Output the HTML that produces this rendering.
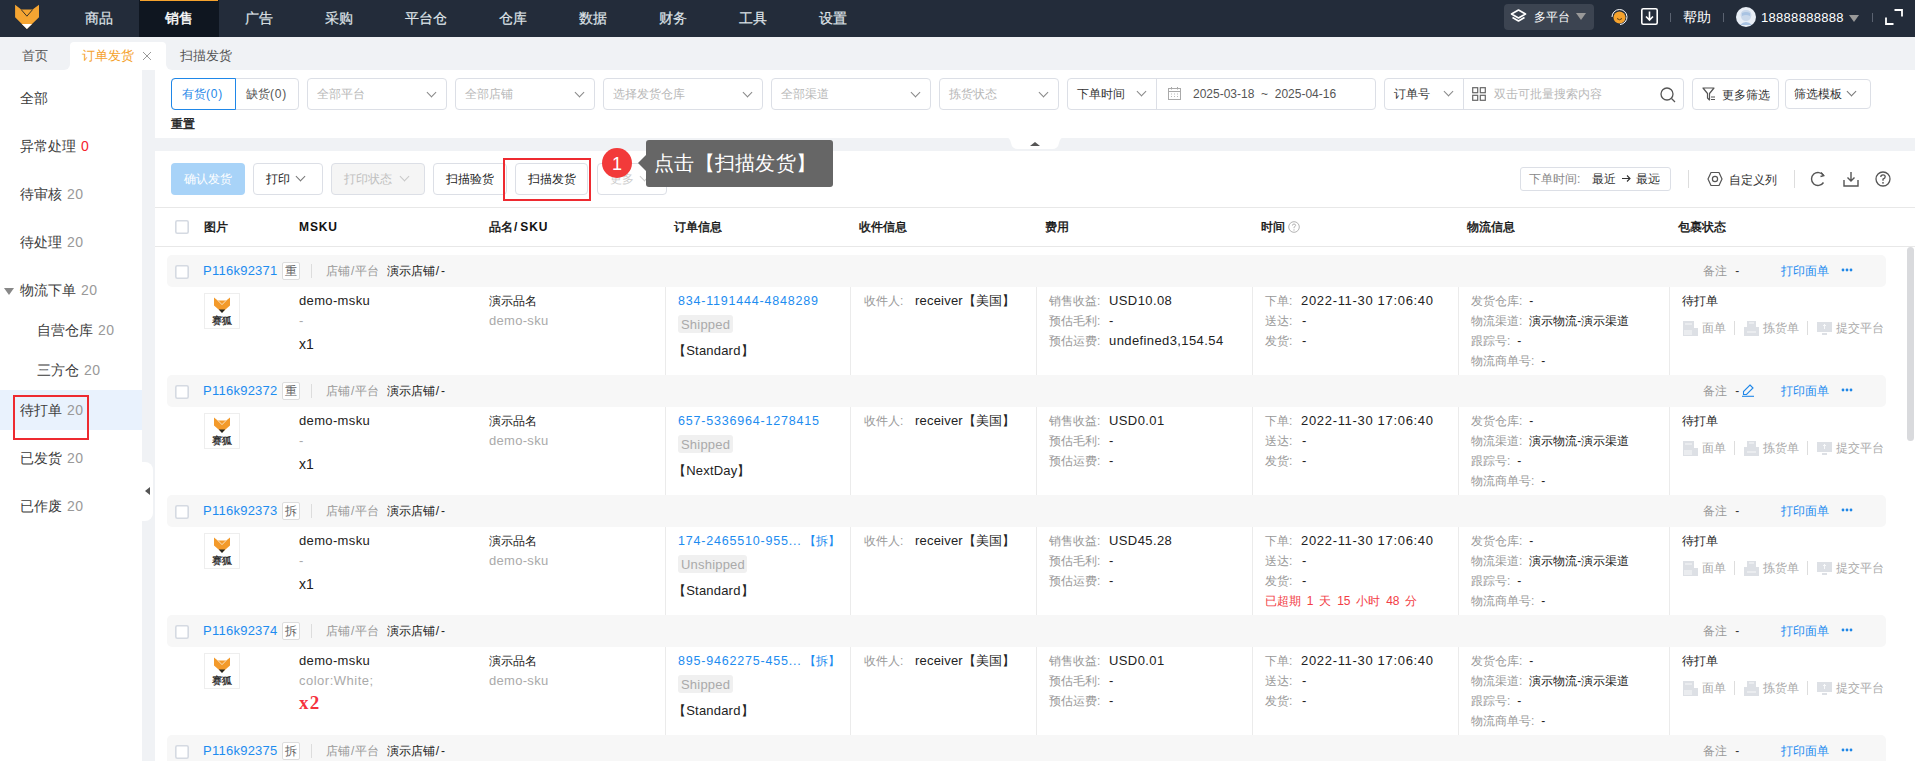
<!DOCTYPE html><html><head><meta charset="utf-8"><style>
*{box-sizing:border-box;margin:0;padding:0}
html,body{width:1915px;height:761px;overflow:hidden;background:#f0f2f5;font-family:"Liberation Sans",sans-serif;color:#333}
.ab{position:absolute}
.t{position:absolute;white-space:nowrap;line-height:1}
.nav{position:absolute;left:0;top:0;width:1915px;height:37px;background:#232c3a}
.ni{position:absolute;top:0;height:36px;line-height:36px;color:#dfe3e8;font-size:14px;text-align:center;-webkit-text-stroke:0.2px #dfe3e8}
.box{position:absolute;border:1px solid #dcdfe6;border-radius:4px;background:#fff}
.ph{color:#b8b8b8}
.chev{position:absolute;width:7px;height:7px;border-right:1.2px solid #777;border-bottom:1.2px solid #777;transform:rotate(45deg)}
.vl{position:absolute;width:1px;background:#ebebeb}
.g{color:#999}
.blue{color:#1d8cf0}
.lat{letter-spacing:0.6px}
</style></head><body>
<div class="nav"></div>
<div class="ab" style="left:139px;top:0;width:80px;height:37px;background:#0f1620"></div>
<div class="ab" style="left:140px;top:0;width:78px;height:1px;background:#f5a22d"></div>
<svg class="ab" style="left:0;top:0" width="56" height="36" viewBox="0 0 56 36"><path d="M15.1 4.7 L21.2 9.4 H32.6 L39 4.7 V17.3 L26.9 29.1 L15.1 17.3 Z" fill="#f5a532"/><path d="M21.2 9.6 L26.9 16.2 L32.6 9.6" stroke="#3b3326" stroke-width="1" fill="none"/><path d="M21.8 23.9 H32 L26.9 29.1 Z" fill="#fff"/></svg>
<div class="ni" style="left:59px;width:80px;color:#dfe3e8;font-weight:normal">商品</div>
<div class="ni" style="left:139px;width:80px;color:#ffffff;font-weight:normal;-webkit-text-stroke:0.4px #fff">销售</div>
<div class="ni" style="left:219px;width:80px;color:#dfe3e8;font-weight:normal">广告</div>
<div class="ni" style="left:299px;width:80px;color:#dfe3e8;font-weight:normal">采购</div>
<div class="ni" style="left:379px;width:94px;color:#dfe3e8;font-weight:normal">平台仓</div>
<div class="ni" style="left:473px;width:80px;color:#dfe3e8;font-weight:normal">仓库</div>
<div class="ni" style="left:553px;width:80px;color:#dfe3e8;font-weight:normal">数据</div>
<div class="ni" style="left:633px;width:80px;color:#dfe3e8;font-weight:normal">财务</div>
<div class="ni" style="left:713px;width:80px;color:#dfe3e8;font-weight:normal">工具</div>
<div class="ni" style="left:793px;width:80px;color:#dfe3e8;font-weight:normal">设置</div>
<div class="ab" style="left:1504px;top:4px;width:90px;height:26px;background:#3c4451;border-radius:4px"></div>
<svg class="ab" style="left:1510px;top:9px" width="17" height="16" viewBox="0 0 17 16"><path d="M8.5 1 L15.5 5 L8.5 9 L1.5 5 Z" fill="none" stroke="#fff" stroke-width="1.6" stroke-linejoin="round"/><path d="M2.5 8.5 L8.5 12 L14.5 8.5" fill="none" stroke="#fff" stroke-width="1.6" stroke-linejoin="round"/></svg>
<div class="t" style="left:1534px;top:11px;font-size:12px;color:#fff">多平台</div>
<div class="ab" style="left:1576px;top:13px;width:0;height:0;border-left:5px solid transparent;border-right:5px solid transparent;border-top:7px solid #999"></div>
<svg class="ab" style="left:1610px;top:8px" width="18" height="18" viewBox="0 0 18 18"><circle cx="9.5" cy="9.5" r="6" fill="#f5a22d"/><path d="M7 10.5 Q9.5 13 12 10.5" stroke="#5a3b10" stroke-width="1" fill="none"/><path d="M2 9 A7.5 7.5 0 1 1 10 16.5" stroke="#fff" stroke-width="1" fill="none"/></svg>
<svg class="ab" style="left:1641px;top:8px" width="17" height="17" viewBox="0 0 17 17"><rect x="0.8" y="0.8" width="15.4" height="15.4" rx="1.5" fill="none" stroke="#fff" stroke-width="1.6"/><path d="M8.5 3.5 V11.5 M5 8.5 L8.5 12 L12 8.5" stroke="#fff" stroke-width="1.6" fill="none"/></svg>
<div class="ab" style="left:1670px;top:13px;width:1px;height:9px;background:#5a6270"></div>
<div class="t" style="left:1683px;top:10px;font-size:14px;color:#fff">帮助</div>
<div class="ab" style="left:1723px;top:13px;width:1px;height:9px;background:#5a6270"></div>
<svg class="ab" style="left:1736px;top:7px" width="20" height="20" viewBox="0 0 20 20"><circle cx="10" cy="10" r="10" fill="#e8eef6"/><path d="M4.5 8 Q5 3 10 3 Q15 3 15.5 8 L15 10 Q14 14 10 14 Q6 14 5 10 Z" fill="#c9d8ea"/><path d="M6 6 Q10 4 14 6 L14 9 Q10 7 6 9 Z" fill="#a9c3e2"/><path d="M4 18 Q10 12 16 18 Z" fill="#a9c3e2"/></svg>
<div class="t lat" style="left:1761px;top:11px;font-size:13px;color:#fff;letter-spacing:0.3px">18888888888</div>
<div class="ab" style="left:1849px;top:15px;width:0;height:0;border-left:5px solid transparent;border-right:5px solid transparent;border-top:7px solid #999"></div>
<div class="ab" style="left:1872px;top:13px;width:1px;height:9px;background:#5a6270"></div>
<svg class="ab" style="left:1885px;top:9px" width="18" height="16" viewBox="0 0 18 16"><path d="M9.5 1 H17 V7.5 M1 8.5 V15 H8.5" stroke="#fff" stroke-width="1.8" fill="none"/></svg>
<div class="ab" style="left:0;top:37px;width:1915px;height:33px;background:#f0f2f5"></div>
<div class="t" style="left:22px;top:49px;font-size:13px;color:#555">首页</div>
<div class="ab" style="left:70px;top:42px;width:96px;height:28px;background:#fff;border-radius:4px 4px 0 0"></div>
<div class="ab" style="left:64px;top:64px;width:6px;height:6px;background:#fff"></div><div class="ab" style="left:64px;top:64px;width:6px;height:6px;background:#f0f2f5;border-radius:0 0 6px 0"></div>
<div class="ab" style="left:166px;top:64px;width:6px;height:6px;background:#fff"></div><div class="ab" style="left:166px;top:64px;width:6px;height:6px;background:#f0f2f5;border-radius:0 0 0 6px"></div>
<div class="t" style="left:82px;top:49px;font-size:13px;color:#f5a22d">订单发货</div>
<svg class="ab" style="left:142px;top:51px" width="10" height="10" viewBox="0 0 10 10"><path d="M1 1 L9 9 M9 1 L1 9" stroke="#999" stroke-width="1"/></svg>
<div class="t" style="left:180px;top:49px;font-size:13px;color:#555">扫描发货</div>
<div class="ab" style="left:0;top:70px;width:142px;height:691px;background:#fff"></div>
<div class="ab" style="left:0;top:390px;width:142px;height:40px;background:#e9f2fd"></div>
<div class="t" style="left:20px;top:91px;font-size:14px;color:#3c3c3c">全部<span style="color:#999;margin-left:5px;letter-spacing:0.5px"></span></div>
<div class="t" style="left:20px;top:139px;font-size:14px;color:#3c3c3c">异常处理<span style="color:#f5222d;margin-left:5px;letter-spacing:0.5px">0</span></div>
<div class="t" style="left:20px;top:187px;font-size:14px;color:#3c3c3c">待审核<span style="color:#999;margin-left:5px;letter-spacing:0.5px">20</span></div>
<div class="t" style="left:20px;top:235px;font-size:14px;color:#3c3c3c">待处理<span style="color:#999;margin-left:5px;letter-spacing:0.5px">20</span></div>
<div class="t" style="left:20px;top:283px;font-size:14px;color:#3c3c3c">物流下单<span style="color:#999;margin-left:5px;letter-spacing:0.5px">20</span></div>
<div class="t" style="left:37px;top:323px;font-size:14px;color:#3c3c3c">自营仓库<span style="color:#999;margin-left:5px;letter-spacing:0.5px">20</span></div>
<div class="t" style="left:37px;top:363px;font-size:14px;color:#3c3c3c">三方仓<span style="color:#999;margin-left:5px;letter-spacing:0.5px">20</span></div>
<div class="t" style="left:20px;top:403px;font-size:14px;color:#3c3c3c">待打单<span style="color:#999;margin-left:5px;letter-spacing:0.5px">20</span></div>
<div class="t" style="left:20px;top:451px;font-size:14px;color:#3c3c3c">已发货<span style="color:#999;margin-left:5px;letter-spacing:0.5px">20</span></div>
<div class="t" style="left:20px;top:499px;font-size:14px;color:#3c3c3c">已作废<span style="color:#999;margin-left:5px;letter-spacing:0.5px">20</span></div>
<div class="ab" style="left:4px;top:288px;width:0;height:0;border-left:5px solid transparent;border-right:5px solid transparent;border-top:7px solid #888"></div>
<div class="ab" style="left:13px;top:395px;width:76px;height:45px;border:2px solid #ee2a30"></div>
<div class="ab" style="left:142px;top:462px;width:11px;height:59px;background:#fff;border-radius:0 8px 8px 0"></div>
<div class="ab" style="left:145px;top:487px;width:0;height:0;border-top:4px solid transparent;border-bottom:4px solid transparent;border-right:5px solid #555"></div>
<div class="ab" style="left:155px;top:70px;width:1760px;height:68px;background:#fff"></div>
<div class="ab" style="left:171px;top:78px;width:128px;height:32px;border:1px solid #dcdfe6;border-radius:4px;background:#fff"></div>
<div class="ab" style="left:171px;top:78px;width:65px;height:32px;border:1px solid #1f87e8;border-radius:4px 0 0 4px"></div>
<div class="t" style="left:182px;top:88px;font-size:12px;color:#1f87e8">有货<span style="letter-spacing:0.8px">(0)</span></div>
<div class="t" style="left:246px;top:88px;font-size:12px;color:#555">缺货<span style="letter-spacing:0.8px">(0)</span></div>
<div class="box" style="left:307px;top:78px;width:140px;height:32px"></div>
<div class="t ph" style="left:317px;top:88px;font-size:12px">全部平台</div>
<div class="chev" style="left:428px;top:89px;border-color:#888"></div>
<div class="box" style="left:455px;top:78px;width:140px;height:32px"></div>
<div class="t ph" style="left:465px;top:88px;font-size:12px">全部店铺</div>
<div class="chev" style="left:576px;top:89px;border-color:#888"></div>
<div class="box" style="left:603px;top:78px;width:160px;height:32px"></div>
<div class="t ph" style="left:613px;top:88px;font-size:12px">选择发货仓库</div>
<div class="chev" style="left:744px;top:89px;border-color:#888"></div>
<div class="box" style="left:771px;top:78px;width:160px;height:32px"></div>
<div class="t ph" style="left:781px;top:88px;font-size:12px">全部渠道</div>
<div class="chev" style="left:912px;top:89px;border-color:#888"></div>
<div class="box" style="left:939px;top:78px;width:120px;height:32px"></div>
<div class="t ph" style="left:949px;top:88px;font-size:12px">拣货状态</div>
<div class="chev" style="left:1040px;top:89px;border-color:#888"></div>
<div class="box" style="left:1067px;top:78px;width:309px;height:32px"></div>
<div class="ab" style="left:1156px;top:79px;width:1px;height:30px;background:#dcdfe6"></div>
<div class="t" style="left:1077px;top:88px;font-size:12px;color:#333">下单时间</div>
<div class="chev" style="left:1138px;top:88px;border-color:#888"></div>
<svg class="ab" style="left:1168px;top:87px" width="13" height="13" viewBox="0 0 13 13"><rect x="0.5" y="1.5" width="12" height="11" fill="none" stroke="#aaa"/><path d="M0.5 4.5 H12.5 M3.5 0 V2.5 M9.5 0 V2.5" stroke="#aaa"/><path d="M3 7 H4 M6 7 H7 M9 7 H10 M3 9.5 H4 M6 9.5 H7 M9 9.5 H10" stroke="#bbb"/></svg>
<div class="t" style="left:1193px;top:88px;font-size:12px;color:#555">2025-03-18 &nbsp;~&nbsp; 2025-04-16</div>
<div class="box" style="left:1384px;top:78px;width:300px;height:32px"></div>
<div class="ab" style="left:1463px;top:79px;width:1px;height:30px;background:#dcdfe6"></div>
<div class="t" style="left:1394px;top:88px;font-size:12px;color:#333">订单号</div>
<div class="chev" style="left:1445px;top:88px;border-color:#888"></div>
<svg class="ab" style="left:1472px;top:87px" width="14" height="14" viewBox="0 0 14 14"><rect x="0.7" y="0.7" width="5" height="5" fill="none" stroke="#666" stroke-width="1.2"/><rect x="8.3" y="0.7" width="5" height="5" fill="none" stroke="#666" stroke-width="1.2"/><rect x="0.7" y="8.3" width="5" height="5" fill="none" stroke="#666" stroke-width="1.2"/><rect x="8.3" y="8.3" width="5" height="5" fill="none" stroke="#666" stroke-width="1.2"/></svg>
<div class="t ph" style="left:1494px;top:88px;font-size:12px">双击可批量搜索内容</div>
<svg class="ab" style="left:1660px;top:87px" width="16" height="16" viewBox="0 0 16 16"><circle cx="7" cy="7" r="6" fill="none" stroke="#555" stroke-width="1.3"/><path d="M11.5 11.5 L15 15" stroke="#555" stroke-width="1.3"/></svg>
<div class="box" style="left:1692px;top:78px;width:87px;height:32px"></div>
<svg class="ab" style="left:1702px;top:87px" width="14" height="14" viewBox="0 0 14 14"><path d="M1 1 H12 L7.5 6.5 V13 L5.5 11 V6.5 Z" fill="none" stroke="#555" stroke-width="1.2" stroke-linejoin="round"/><path d="M9 10 H13 M9 12.5 H13" stroke="#555" stroke-width="1"/></svg>
<div class="t" style="left:1722px;top:89px;font-size:12px;color:#333">更多筛选</div>
<div class="box" style="left:1785px;top:79px;width:86px;height:30px"></div>
<div class="t" style="left:1794px;top:88px;font-size:12px;color:#333">筛选模板</div>
<div class="chev" style="left:1848px;top:88px;border-color:#777"></div>
<div class="t" style="left:171px;top:118px;font-size:12px;color:#222;-webkit-text-stroke:0.4px #222">重置</div>
<svg class="ab" style="left:1005px;top:137px" width="60" height="14" viewBox="0 0 60 14"><path d="M0 0 H60 Q55 0 54 6 Q53 12 47 12 H13 Q7 12 6 6 Q5 0 0 0 Z" fill="#fff"/><path d="M25 9 L30 5 L35 9 Z" fill="#555"/></svg>
<div class="ab" style="left:155px;top:151px;width:1760px;height:610px;background:#fff"></div>
<div class="ab" style="left:171px;top:163px;width:74px;height:32px;background:#a8d3f8;border-radius:4px"></div>
<div class="t" style="left:184px;top:173px;font-size:12px;color:#fff">确认发货</div>
<div class="box" style="left:253px;top:163px;width:70px;height:32px"></div>
<div class="t" style="left:266px;top:173px;font-size:12px;color:#222">打印</div>
<div class="chev" style="left:297px;top:173px;border-color:#777"></div>
<div class="box" style="left:331px;top:163px;width:94px;height:32px;background:#f5f5f5"></div>
<div class="t" style="left:344px;top:173px;font-size:12px;color:#c0c0c0">打印状态</div>
<div class="chev" style="left:401px;top:173px;border-color:#c8c8c8"></div>
<div class="box" style="left:433px;top:163px;width:74px;height:32px"></div>
<div class="t" style="left:446px;top:173px;font-size:12px;color:#222">扫描验货</div>
<div class="box" style="left:515px;top:163px;width:73px;height:32px"></div>
<div class="t" style="left:528px;top:173px;font-size:12px;color:#222">扫描发货</div>
<div class="box" style="left:597px;top:163px;width:70px;height:32px"></div>
<div class="t" style="left:610px;top:173px;font-size:12px;color:#ccc">更多</div>
<div class="chev" style="left:641px;top:173px;border-color:#ccc"></div>
<div class="ab" style="left:503px;top:158px;width:88px;height:43px;border:2px solid #ee2a30"></div>
<div class="ab" style="left:646px;top:140px;width:187px;height:47px;background:#666;border-radius:3px"></div>
<div class="ab" style="left:638px;top:155px;width:0;height:0;border-top:8px solid transparent;border-bottom:8px solid transparent;border-right:8px solid #666"></div>
<div class="t" style="left:654px;top:153px;font-size:20px;color:#fff;letter-spacing:0.3px">点击【扫描发货】</div>
<div class="ab" style="left:602px;top:148px;width:30px;height:30px;border-radius:50%;background:#f23a3a"></div>
<div class="t" style="left:602px;top:155px;width:30px;text-align:center;font-size:18px;color:#fff">1</div>
<div class="box" style="left:1520px;top:167px;width:151px;height:24px;border-radius:3px"></div>
<div class="t" style="left:1529px;top:173px;font-size:12px;color:#888">下单时间:<span style="color:#333;margin-left:12px">最近<svg style="margin:0 5px 0 6px;vertical-align:0px" width="9" height="9" viewBox="0 0 9 9"><path d="M0 4.5 H8 M5 1.5 L8 4.5 L5 7.5" stroke="#333" stroke-width="1.1" fill="none"/></svg>最远</span></div>
<div class="ab" style="left:1688px;top:170px;width:1px;height:18px;background:#ddd"></div>
<svg class="ab" style="left:1707px;top:171px" width="16" height="16" viewBox="0 0 16 16"><path d="M4 1.5 H12 L15 8 L12 14.5 H4 L1 8 Z" fill="none" stroke="#555" stroke-width="1.2" stroke-linejoin="round"/><circle cx="8" cy="8" r="2.6" fill="none" stroke="#555" stroke-width="1.2"/></svg>
<div class="t" style="left:1729px;top:174px;font-size:12px;color:#333">自定义列</div>
<div class="ab" style="left:1794px;top:170px;width:1px;height:18px;background:#ddd"></div>
<svg class="ab" style="left:1810px;top:171px" width="16" height="16" viewBox="0 0 16 16"><path d="M13.5 4.5 A6.5 6.5 0 1 0 13.5 11.5" fill="none" stroke="#555" stroke-width="1.4"/><path d="M11 1.5 L13.8 4.6 L10.5 5.5" fill="none" stroke="#555" stroke-width="1.3"/></svg>
<svg class="ab" style="left:1843px;top:171px" width="16" height="16" viewBox="0 0 16 16"><path d="M8 1 V10 M4.5 6.5 L8 10 L11.5 6.5 M1 9 V15 H15 V9" fill="none" stroke="#555" stroke-width="1.4"/></svg>
<svg class="ab" style="left:1875px;top:171px" width="16" height="16" viewBox="0 0 16 16"><circle cx="8" cy="8" r="7" fill="none" stroke="#555" stroke-width="1.3"/><path d="M5.8 6 Q5.8 3.8 8 3.8 Q10.2 3.8 10.2 5.8 Q10.2 7.2 8 8.2 V9.8" fill="none" stroke="#555" stroke-width="1.3"/><circle cx="8" cy="11.8" r="0.9" fill="#555"/></svg>
<div class="ab" style="left:155px;top:207px;width:1760px;height:1px;background:#e8e8e8"></div>
<div class="ab" style="left:155px;top:246px;width:1760px;height:1px;background:#e8e8e8"></div>
<svg class="ab" style="left:175px;top:220px" width="14" height="14" viewBox="0 0 14 14"><rect x="0.8" y="0.8" width="12.4" height="12.4" rx="1.5" fill="#fff" stroke="#d5dae2" stroke-width="1.6"/></svg>
<div class="t" style="left:204px;top:221px;font-size:12px;color:#111;-webkit-text-stroke:0.4px #111">图片</div>
<div class="t" style="left:299px;top:221px;font-size:12px;color:#111;-webkit-text-stroke:0.4px #111"><b style="-webkit-text-stroke:0;letter-spacing:0.9px">MSKU</b></div>
<div class="t" style="left:489px;top:221px;font-size:12px;color:#111;-webkit-text-stroke:0.4px #111">品名<b style="-webkit-text-stroke:0;letter-spacing:0.9px"><span style="margin:0 2px 0 1px">/</span>SKU</b></div>
<div class="t" style="left:674px;top:221px;font-size:12px;color:#111;-webkit-text-stroke:0.4px #111">订单信息</div>
<div class="t" style="left:859px;top:221px;font-size:12px;color:#111;-webkit-text-stroke:0.4px #111">收件信息</div>
<div class="t" style="left:1045px;top:221px;font-size:12px;color:#111;-webkit-text-stroke:0.4px #111">费用</div>
<div class="t" style="left:1261px;top:221px;font-size:12px;color:#111;-webkit-text-stroke:0.4px #111">时间</div>
<div class="t" style="left:1467px;top:221px;font-size:12px;color:#111;-webkit-text-stroke:0.4px #111">物流信息</div>
<div class="t" style="left:1678px;top:221px;font-size:12px;color:#111;-webkit-text-stroke:0.4px #111">包裹状态</div>
<svg class="ab" style="left:1288px;top:221px" width="12" height="12" viewBox="0 0 12 12"><circle cx="6" cy="6" r="5.3" fill="none" stroke="#aaa" stroke-width="0.9"/><path d="M4.4 4.6 Q4.4 3 6 3 Q7.6 3 7.6 4.4 Q7.6 5.4 6 6.2 V7.2" fill="none" stroke="#aaa" stroke-width="0.9"/><circle cx="6" cy="8.9" r="0.6" fill="#aaa"/></svg>
<div class="ab" style="left:1907px;top:247px;width:7px;height:194px;background:#d9dadd;border-radius:4px"></div>
<div class="ab" style="left:167px;top:255px;width:1719px;height:32px;background:#f7f7f7;border-radius:5px"></div>
<svg class="ab" style="left:175px;top:265px" width="14" height="14" viewBox="0 0 14 14"><rect x="0.8" y="0.8" width="12.4" height="12.4" rx="1.5" fill="#fff" stroke="#d5dae2" stroke-width="1.6"/></svg>
<div class="t blue lat" style="left:203px;top:264px;font-size:13px;letter-spacing:0.25px">P116k92371</div>
<div class="ab" style="left:282px;top:262px;width:18px;height:18px;border:1px solid #ddd;border-radius:2px;background:#fff"></div>
<div class="t" style="left:285px;top:265px;font-size:12px;color:#666">重</div>
<div class="ab" style="left:311px;top:264px;width:1px;height:14px;background:#ddd"></div>
<div class="t" style="left:326px;top:265px;font-size:12px;color:#999">店铺<span style="margin:0 1px">/</span>平台 <span style="color:#222;margin-left:4px">演示店铺<span style="margin-left:1px;letter-spacing:2px">/-</span></span></div>
<div class="t" style="left:1703px;top:265px;font-size:12px;color:#999">备注 <span style="color:#333;margin-left:5px">-</span></div>
<div class="t blue" style="left:1781px;top:265px;font-size:12px">打印面单</div>
<svg class="ab" style="left:1841px;top:268px" width="12" height="4" viewBox="0 0 12 4"><circle cx="2" cy="2" r="1.4" fill="#1f87e8"/><circle cx="6" cy="2" r="1.4" fill="#1f87e8"/><circle cx="10" cy="2" r="1.4" fill="#1f87e8"/></svg>
<div class="vl" style="left:665px;top:287px;height:88px"></div>
<div class="vl" style="left:850px;top:287px;height:88px"></div>
<div class="vl" style="left:1036px;top:287px;height:88px"></div>
<div class="vl" style="left:1252px;top:287px;height:88px"></div>
<div class="vl" style="left:1458px;top:287px;height:88px"></div>
<div class="vl" style="left:1669px;top:287px;height:88px"></div>
<div class="ab" style="left:204px;top:293px;width:36px;height:36px;border:1px solid #eee;background:#fff"></div>
<svg class="ab" style="left:214px;top:294px" width="16" height="20" viewBox="0 0 16 20"><path d="M0 3.4 L3.7 6.4 H12.3 L16 3.4 V11.4 L8 18.5 L0 11.4 Z" fill="#f39a2b"/><path d="M4 6.6 L8 10.6 L12 6.6" stroke="#fff" stroke-width="0.7" fill="none"/><path d="M4.8 15.6 L8 19 L11.2 15.6 Z" fill="#222"/></svg>
<div class="t" style="left:212px;top:315px;font-size:10px;color:#222;-webkit-text-stroke:0.3px #222;margin-top:1px">赛狐</div>
<div class="t lat" style="left:299px;top:294px;font-size:13px;color:#222;letter-spacing:0.35px">demo-msku</div>
<div class="t lat" style="left:299px;top:314px;font-size:13px;color:#aaa;letter-spacing:0.5px">-</div>
<div class="t" style="left:299px;top:337px;font-size:14px;color:#222">x1</div>
<div class="t" style="left:489px;top:295px;font-size:12px;color:#222">演示品名</div>
<div class="t lat" style="left:489px;top:314px;font-size:13px;color:#aaa;letter-spacing:0.3px">demo-sku</div>
<div class="t blue" style="left:678px;top:295px;font-size:12.5px;letter-spacing:0.8px">834-1191444-4848289</div>
<div class="ab" style="left:678px;top:315px;width:55px;height:18px;background:#f0f0f0;border-radius:3px"></div>
<div class="t" style="left:681px;top:318px;font-size:13px;color:#aaa;letter-spacing:0.2px">Shipped</div>
<div class="t" style="left:673px;top:344px;font-size:13px;color:#222;letter-spacing:0.2px">【Standard】</div>
<div class="t" style="left:864px;top:295px;font-size:12px;color:#999">收件人:</div>
<div class="t" style="left:915px;top:294px;font-size:13px;color:#222;letter-spacing:0.2px">receiver【美国】</div>
<div class="t" style="left:1049px;top:295px;font-size:12px;color:#999">销售收益:</div>
<div class="t" style="left:1109px;top:294px;font-size:13px;color:#222;letter-spacing:0.4px">USD10.08</div>
<div class="t" style="left:1049px;top:315px;font-size:12px;color:#999">预估毛利:</div>
<div class="t" style="left:1109px;top:314px;font-size:13px;color:#222">-</div>
<div class="t" style="left:1049px;top:335px;font-size:12px;color:#999">预估运费:</div>
<div class="t" style="left:1109px;top:334px;font-size:13px;color:#222;letter-spacing:0.4px">undefined3,154.54</div>
<div class="t" style="left:1265px;top:295px;font-size:12px;color:#999">下单:</div>
<div class="t" style="left:1301px;top:294px;font-size:13px;color:#222;letter-spacing:0.68px">2022-11-30 17:06:40</div>
<div class="t" style="left:1265px;top:315px;font-size:12px;color:#999">送达:</div>
<div class="t" style="left:1302px;top:314px;font-size:13px;color:#222">-</div>
<div class="t" style="left:1265px;top:335px;font-size:12px;color:#999">发货:</div>
<div class="t" style="left:1302px;top:334px;font-size:13px;color:#222">-</div>
<div class="t" style="left:1471px;top:295px;font-size:12px;color:#999">发货仓库:<span style="color:#222;margin-left:7px">-</span></div>
<div class="t" style="left:1471px;top:315px;font-size:12px;color:#999">物流渠道:<span style="color:#222;margin-left:7px">演示物流-演示渠道</span></div>
<div class="t" style="left:1471px;top:335px;font-size:12px;color:#999">跟踪号:<span style="color:#222;margin-left:7px">-</span></div>
<div class="t" style="left:1471px;top:355px;font-size:12px;color:#999">物流商单号:<span style="color:#222;margin-left:7px">-</span></div>
<div class="t" style="left:1682px;top:295px;font-size:12px;color:#222">待打单</div>
<svg class="ab" style="left:1683px;top:321px" width="15" height="15" viewBox="0 0 15 15"><rect x="0" y="0" width="11" height="15" fill="#dde0e5"/><rect x="9" y="7" width="6" height="8" fill="#dde0e5"/><path d="M2 3 H9 M2 9 V14 M4 9 V14 M6 9 V14 M8 9 V14" stroke="#fff" stroke-width="0.8"/></svg>
<div class="t" style="left:1702px;top:322px;font-size:12px;color:#aaa">面单</div>
<div class="ab" style="left:1734px;top:321px;width:1px;height:14px;background:#ddd"></div>
<svg class="ab" style="left:1744px;top:321px" width="15" height="15" viewBox="0 0 15 15"><rect x="3" y="0" width="9" height="6" fill="#dde0e5"/><rect x="0" y="6" width="15" height="9" fill="#dde0e5"/><path d="M5 2 H10 M3 11 H12" stroke="#fff" stroke-width="0.8"/></svg>
<div class="t" style="left:1763px;top:322px;font-size:12px;color:#aaa">拣货单</div>
<div class="ab" style="left:1807px;top:321px;width:1px;height:14px;background:#ddd"></div>
<svg class="ab" style="left:1817px;top:322px" width="15" height="14" viewBox="0 0 15 14"><rect x="0" y="0" width="15" height="10" fill="#dde0e5"/><rect x="5" y="11" width="5" height="2" fill="#dde0e5"/><path d="M7.5 7 V2.5 M6 4 L7.5 2.5 L9 4" stroke="#fff" stroke-width="0.8" fill="none"/></svg>
<div class="t" style="left:1836px;top:322px;font-size:12px;color:#aaa">提交平台</div>
<div class="ab" style="left:167px;top:375px;width:1719px;height:32px;background:#f7f7f7;border-radius:5px"></div>
<svg class="ab" style="left:175px;top:385px" width="14" height="14" viewBox="0 0 14 14"><rect x="0.8" y="0.8" width="12.4" height="12.4" rx="1.5" fill="#fff" stroke="#d5dae2" stroke-width="1.6"/></svg>
<div class="t blue lat" style="left:203px;top:384px;font-size:13px;letter-spacing:0.25px">P116k92372</div>
<div class="ab" style="left:282px;top:382px;width:18px;height:18px;border:1px solid #ddd;border-radius:2px;background:#fff"></div>
<div class="t" style="left:285px;top:385px;font-size:12px;color:#666">重</div>
<div class="ab" style="left:311px;top:384px;width:1px;height:14px;background:#ddd"></div>
<div class="t" style="left:326px;top:385px;font-size:12px;color:#999">店铺<span style="margin:0 1px">/</span>平台 <span style="color:#222;margin-left:4px">演示店铺<span style="margin-left:1px;letter-spacing:2px">/-</span></span></div>
<div class="t" style="left:1703px;top:385px;font-size:12px;color:#999">备注 <span style="color:#333;margin-left:5px">-</span></div>
<svg class="ab" style="left:1741px;top:383px" width="14" height="14" viewBox="0 0 14 14"><path d="M9 2 L12 5 L5.5 11.5 H2.5 V8.5 Z" fill="none" stroke="#1f87e8" stroke-width="1.1"/><path d="M1 13.3 H13" stroke="#1f87e8" stroke-width="1.1"/></svg>
<div class="t blue" style="left:1781px;top:385px;font-size:12px">打印面单</div>
<svg class="ab" style="left:1841px;top:388px" width="12" height="4" viewBox="0 0 12 4"><circle cx="2" cy="2" r="1.4" fill="#1f87e8"/><circle cx="6" cy="2" r="1.4" fill="#1f87e8"/><circle cx="10" cy="2" r="1.4" fill="#1f87e8"/></svg>
<div class="vl" style="left:665px;top:407px;height:88px"></div>
<div class="vl" style="left:850px;top:407px;height:88px"></div>
<div class="vl" style="left:1036px;top:407px;height:88px"></div>
<div class="vl" style="left:1252px;top:407px;height:88px"></div>
<div class="vl" style="left:1458px;top:407px;height:88px"></div>
<div class="vl" style="left:1669px;top:407px;height:88px"></div>
<div class="ab" style="left:204px;top:413px;width:36px;height:36px;border:1px solid #eee;background:#fff"></div>
<svg class="ab" style="left:214px;top:414px" width="16" height="20" viewBox="0 0 16 20"><path d="M0 3.4 L3.7 6.4 H12.3 L16 3.4 V11.4 L8 18.5 L0 11.4 Z" fill="#f39a2b"/><path d="M4 6.6 L8 10.6 L12 6.6" stroke="#fff" stroke-width="0.7" fill="none"/><path d="M4.8 15.6 L8 19 L11.2 15.6 Z" fill="#222"/></svg>
<div class="t" style="left:212px;top:435px;font-size:10px;color:#222;-webkit-text-stroke:0.3px #222;margin-top:1px">赛狐</div>
<div class="t lat" style="left:299px;top:414px;font-size:13px;color:#222;letter-spacing:0.35px">demo-msku</div>
<div class="t lat" style="left:299px;top:434px;font-size:13px;color:#aaa;letter-spacing:0.5px">-</div>
<div class="t" style="left:299px;top:457px;font-size:14px;color:#222">x1</div>
<div class="t" style="left:489px;top:415px;font-size:12px;color:#222">演示品名</div>
<div class="t lat" style="left:489px;top:434px;font-size:13px;color:#aaa;letter-spacing:0.3px">demo-sku</div>
<div class="t blue" style="left:678px;top:415px;font-size:12.5px;letter-spacing:0.8px">657-5336964-1278415</div>
<div class="ab" style="left:678px;top:435px;width:55px;height:18px;background:#f0f0f0;border-radius:3px"></div>
<div class="t" style="left:681px;top:438px;font-size:13px;color:#aaa;letter-spacing:0.2px">Shipped</div>
<div class="t" style="left:673px;top:464px;font-size:13px;color:#222;letter-spacing:0.2px">【NextDay】</div>
<div class="t" style="left:864px;top:415px;font-size:12px;color:#999">收件人:</div>
<div class="t" style="left:915px;top:414px;font-size:13px;color:#222;letter-spacing:0.2px">receiver【美国】</div>
<div class="t" style="left:1049px;top:415px;font-size:12px;color:#999">销售收益:</div>
<div class="t" style="left:1109px;top:414px;font-size:13px;color:#222;letter-spacing:0.4px">USD0.01</div>
<div class="t" style="left:1049px;top:435px;font-size:12px;color:#999">预估毛利:</div>
<div class="t" style="left:1109px;top:434px;font-size:13px;color:#222">-</div>
<div class="t" style="left:1049px;top:455px;font-size:12px;color:#999">预估运费:</div>
<div class="t" style="left:1109px;top:454px;font-size:13px;color:#222;letter-spacing:0.4px">-</div>
<div class="t" style="left:1265px;top:415px;font-size:12px;color:#999">下单:</div>
<div class="t" style="left:1301px;top:414px;font-size:13px;color:#222;letter-spacing:0.68px">2022-11-30 17:06:40</div>
<div class="t" style="left:1265px;top:435px;font-size:12px;color:#999">送达:</div>
<div class="t" style="left:1302px;top:434px;font-size:13px;color:#222">-</div>
<div class="t" style="left:1265px;top:455px;font-size:12px;color:#999">发货:</div>
<div class="t" style="left:1302px;top:454px;font-size:13px;color:#222">-</div>
<div class="t" style="left:1471px;top:415px;font-size:12px;color:#999">发货仓库:<span style="color:#222;margin-left:7px">-</span></div>
<div class="t" style="left:1471px;top:435px;font-size:12px;color:#999">物流渠道:<span style="color:#222;margin-left:7px">演示物流-演示渠道</span></div>
<div class="t" style="left:1471px;top:455px;font-size:12px;color:#999">跟踪号:<span style="color:#222;margin-left:7px">-</span></div>
<div class="t" style="left:1471px;top:475px;font-size:12px;color:#999">物流商单号:<span style="color:#222;margin-left:7px">-</span></div>
<div class="t" style="left:1682px;top:415px;font-size:12px;color:#222">待打单</div>
<svg class="ab" style="left:1683px;top:441px" width="15" height="15" viewBox="0 0 15 15"><rect x="0" y="0" width="11" height="15" fill="#dde0e5"/><rect x="9" y="7" width="6" height="8" fill="#dde0e5"/><path d="M2 3 H9 M2 9 V14 M4 9 V14 M6 9 V14 M8 9 V14" stroke="#fff" stroke-width="0.8"/></svg>
<div class="t" style="left:1702px;top:442px;font-size:12px;color:#aaa">面单</div>
<div class="ab" style="left:1734px;top:441px;width:1px;height:14px;background:#ddd"></div>
<svg class="ab" style="left:1744px;top:441px" width="15" height="15" viewBox="0 0 15 15"><rect x="3" y="0" width="9" height="6" fill="#dde0e5"/><rect x="0" y="6" width="15" height="9" fill="#dde0e5"/><path d="M5 2 H10 M3 11 H12" stroke="#fff" stroke-width="0.8"/></svg>
<div class="t" style="left:1763px;top:442px;font-size:12px;color:#aaa">拣货单</div>
<div class="ab" style="left:1807px;top:441px;width:1px;height:14px;background:#ddd"></div>
<svg class="ab" style="left:1817px;top:442px" width="15" height="14" viewBox="0 0 15 14"><rect x="0" y="0" width="15" height="10" fill="#dde0e5"/><rect x="5" y="11" width="5" height="2" fill="#dde0e5"/><path d="M7.5 7 V2.5 M6 4 L7.5 2.5 L9 4" stroke="#fff" stroke-width="0.8" fill="none"/></svg>
<div class="t" style="left:1836px;top:442px;font-size:12px;color:#aaa">提交平台</div>
<div class="ab" style="left:167px;top:495px;width:1719px;height:32px;background:#f7f7f7;border-radius:5px"></div>
<svg class="ab" style="left:175px;top:505px" width="14" height="14" viewBox="0 0 14 14"><rect x="0.8" y="0.8" width="12.4" height="12.4" rx="1.5" fill="#fff" stroke="#d5dae2" stroke-width="1.6"/></svg>
<div class="t blue lat" style="left:203px;top:504px;font-size:13px;letter-spacing:0.25px">P116k92373</div>
<div class="ab" style="left:282px;top:502px;width:18px;height:18px;border:1px solid #ddd;border-radius:2px;background:#fff"></div>
<div class="t" style="left:285px;top:505px;font-size:12px;color:#666">拆</div>
<div class="ab" style="left:311px;top:504px;width:1px;height:14px;background:#ddd"></div>
<div class="t" style="left:326px;top:505px;font-size:12px;color:#999">店铺<span style="margin:0 1px">/</span>平台 <span style="color:#222;margin-left:4px">演示店铺<span style="margin-left:1px;letter-spacing:2px">/-</span></span></div>
<div class="t" style="left:1703px;top:505px;font-size:12px;color:#999">备注 <span style="color:#333;margin-left:5px">-</span></div>
<div class="t blue" style="left:1781px;top:505px;font-size:12px">打印面单</div>
<svg class="ab" style="left:1841px;top:508px" width="12" height="4" viewBox="0 0 12 4"><circle cx="2" cy="2" r="1.4" fill="#1f87e8"/><circle cx="6" cy="2" r="1.4" fill="#1f87e8"/><circle cx="10" cy="2" r="1.4" fill="#1f87e8"/></svg>
<div class="vl" style="left:665px;top:527px;height:88px"></div>
<div class="vl" style="left:850px;top:527px;height:88px"></div>
<div class="vl" style="left:1036px;top:527px;height:88px"></div>
<div class="vl" style="left:1252px;top:527px;height:88px"></div>
<div class="vl" style="left:1458px;top:527px;height:88px"></div>
<div class="vl" style="left:1669px;top:527px;height:88px"></div>
<div class="ab" style="left:204px;top:533px;width:36px;height:36px;border:1px solid #eee;background:#fff"></div>
<svg class="ab" style="left:214px;top:534px" width="16" height="20" viewBox="0 0 16 20"><path d="M0 3.4 L3.7 6.4 H12.3 L16 3.4 V11.4 L8 18.5 L0 11.4 Z" fill="#f39a2b"/><path d="M4 6.6 L8 10.6 L12 6.6" stroke="#fff" stroke-width="0.7" fill="none"/><path d="M4.8 15.6 L8 19 L11.2 15.6 Z" fill="#222"/></svg>
<div class="t" style="left:212px;top:555px;font-size:10px;color:#222;-webkit-text-stroke:0.3px #222;margin-top:1px">赛狐</div>
<div class="t lat" style="left:299px;top:534px;font-size:13px;color:#222;letter-spacing:0.35px">demo-msku</div>
<div class="t lat" style="left:299px;top:554px;font-size:13px;color:#aaa;letter-spacing:0.5px">-</div>
<div class="t" style="left:299px;top:577px;font-size:14px;color:#222">x1</div>
<div class="t" style="left:489px;top:535px;font-size:12px;color:#222">演示品名</div>
<div class="t lat" style="left:489px;top:554px;font-size:13px;color:#aaa;letter-spacing:0.3px">demo-sku</div>
<div class="t blue" style="left:678px;top:535px;font-size:12.5px;letter-spacing:0.8px">174-2465510-955...</div>
<div class="t blue" style="left:804px;top:535px;font-size:12px">【拆】</div>
<div class="ab" style="left:678px;top:555px;width:69px;height:18px;background:#f0f0f0;border-radius:3px"></div>
<div class="t" style="left:681px;top:558px;font-size:13px;color:#aaa;letter-spacing:0.2px">Unshipped</div>
<div class="t" style="left:673px;top:584px;font-size:13px;color:#222;letter-spacing:0.2px">【Standard】</div>
<div class="t" style="left:864px;top:535px;font-size:12px;color:#999">收件人:</div>
<div class="t" style="left:915px;top:534px;font-size:13px;color:#222;letter-spacing:0.2px">receiver【美国】</div>
<div class="t" style="left:1049px;top:535px;font-size:12px;color:#999">销售收益:</div>
<div class="t" style="left:1109px;top:534px;font-size:13px;color:#222;letter-spacing:0.4px">USD45.28</div>
<div class="t" style="left:1049px;top:555px;font-size:12px;color:#999">预估毛利:</div>
<div class="t" style="left:1109px;top:554px;font-size:13px;color:#222">-</div>
<div class="t" style="left:1049px;top:575px;font-size:12px;color:#999">预估运费:</div>
<div class="t" style="left:1109px;top:574px;font-size:13px;color:#222;letter-spacing:0.4px">-</div>
<div class="t" style="left:1265px;top:535px;font-size:12px;color:#999">下单:</div>
<div class="t" style="left:1301px;top:534px;font-size:13px;color:#222;letter-spacing:0.68px">2022-11-30 17:06:40</div>
<div class="t" style="left:1265px;top:555px;font-size:12px;color:#999">送达:</div>
<div class="t" style="left:1302px;top:554px;font-size:13px;color:#222">-</div>
<div class="t" style="left:1265px;top:575px;font-size:12px;color:#999">发货:</div>
<div class="t" style="left:1302px;top:574px;font-size:13px;color:#222">-</div>
<div class="t" style="left:1265px;top:595px;font-size:12px;color:#f23d45;word-spacing:2.5px">已超期 1 天 15 小时 48 分</div>
<div class="t" style="left:1471px;top:535px;font-size:12px;color:#999">发货仓库:<span style="color:#222;margin-left:7px">-</span></div>
<div class="t" style="left:1471px;top:555px;font-size:12px;color:#999">物流渠道:<span style="color:#222;margin-left:7px">演示物流-演示渠道</span></div>
<div class="t" style="left:1471px;top:575px;font-size:12px;color:#999">跟踪号:<span style="color:#222;margin-left:7px">-</span></div>
<div class="t" style="left:1471px;top:595px;font-size:12px;color:#999">物流商单号:<span style="color:#222;margin-left:7px">-</span></div>
<div class="t" style="left:1682px;top:535px;font-size:12px;color:#222">待打单</div>
<svg class="ab" style="left:1683px;top:561px" width="15" height="15" viewBox="0 0 15 15"><rect x="0" y="0" width="11" height="15" fill="#dde0e5"/><rect x="9" y="7" width="6" height="8" fill="#dde0e5"/><path d="M2 3 H9 M2 9 V14 M4 9 V14 M6 9 V14 M8 9 V14" stroke="#fff" stroke-width="0.8"/></svg>
<div class="t" style="left:1702px;top:562px;font-size:12px;color:#aaa">面单</div>
<div class="ab" style="left:1734px;top:561px;width:1px;height:14px;background:#ddd"></div>
<svg class="ab" style="left:1744px;top:561px" width="15" height="15" viewBox="0 0 15 15"><rect x="3" y="0" width="9" height="6" fill="#dde0e5"/><rect x="0" y="6" width="15" height="9" fill="#dde0e5"/><path d="M5 2 H10 M3 11 H12" stroke="#fff" stroke-width="0.8"/></svg>
<div class="t" style="left:1763px;top:562px;font-size:12px;color:#aaa">拣货单</div>
<div class="ab" style="left:1807px;top:561px;width:1px;height:14px;background:#ddd"></div>
<svg class="ab" style="left:1817px;top:562px" width="15" height="14" viewBox="0 0 15 14"><rect x="0" y="0" width="15" height="10" fill="#dde0e5"/><rect x="5" y="11" width="5" height="2" fill="#dde0e5"/><path d="M7.5 7 V2.5 M6 4 L7.5 2.5 L9 4" stroke="#fff" stroke-width="0.8" fill="none"/></svg>
<div class="t" style="left:1836px;top:562px;font-size:12px;color:#aaa">提交平台</div>
<div class="ab" style="left:167px;top:615px;width:1719px;height:32px;background:#f7f7f7;border-radius:5px"></div>
<svg class="ab" style="left:175px;top:625px" width="14" height="14" viewBox="0 0 14 14"><rect x="0.8" y="0.8" width="12.4" height="12.4" rx="1.5" fill="#fff" stroke="#d5dae2" stroke-width="1.6"/></svg>
<div class="t blue lat" style="left:203px;top:624px;font-size:13px;letter-spacing:0.25px">P116k92374</div>
<div class="ab" style="left:282px;top:622px;width:18px;height:18px;border:1px solid #ddd;border-radius:2px;background:#fff"></div>
<div class="t" style="left:285px;top:625px;font-size:12px;color:#666">拆</div>
<div class="ab" style="left:311px;top:624px;width:1px;height:14px;background:#ddd"></div>
<div class="t" style="left:326px;top:625px;font-size:12px;color:#999">店铺<span style="margin:0 1px">/</span>平台 <span style="color:#222;margin-left:4px">演示店铺<span style="margin-left:1px;letter-spacing:2px">/-</span></span></div>
<div class="t" style="left:1703px;top:625px;font-size:12px;color:#999">备注 <span style="color:#333;margin-left:5px">-</span></div>
<div class="t blue" style="left:1781px;top:625px;font-size:12px">打印面单</div>
<svg class="ab" style="left:1841px;top:628px" width="12" height="4" viewBox="0 0 12 4"><circle cx="2" cy="2" r="1.4" fill="#1f87e8"/><circle cx="6" cy="2" r="1.4" fill="#1f87e8"/><circle cx="10" cy="2" r="1.4" fill="#1f87e8"/></svg>
<div class="vl" style="left:665px;top:647px;height:88px"></div>
<div class="vl" style="left:850px;top:647px;height:88px"></div>
<div class="vl" style="left:1036px;top:647px;height:88px"></div>
<div class="vl" style="left:1252px;top:647px;height:88px"></div>
<div class="vl" style="left:1458px;top:647px;height:88px"></div>
<div class="vl" style="left:1669px;top:647px;height:88px"></div>
<div class="ab" style="left:204px;top:653px;width:36px;height:36px;border:1px solid #eee;background:#fff"></div>
<svg class="ab" style="left:214px;top:654px" width="16" height="20" viewBox="0 0 16 20"><path d="M0 3.4 L3.7 6.4 H12.3 L16 3.4 V11.4 L8 18.5 L0 11.4 Z" fill="#f39a2b"/><path d="M4 6.6 L8 10.6 L12 6.6" stroke="#fff" stroke-width="0.7" fill="none"/><path d="M4.8 15.6 L8 19 L11.2 15.6 Z" fill="#222"/></svg>
<div class="t" style="left:212px;top:675px;font-size:10px;color:#222;-webkit-text-stroke:0.3px #222;margin-top:1px">赛狐</div>
<div class="t lat" style="left:299px;top:654px;font-size:13px;color:#222;letter-spacing:0.35px">demo-msku</div>
<div class="t lat" style="left:299px;top:674px;font-size:13px;color:#aaa;letter-spacing:0.5px">color:White;</div>
<div class="t" style="left:299px;top:693px;font-size:19px;color:#f5313d;font-weight:bold;letter-spacing:1.2px;font-family:'Liberation Serif',serif">x2</div>
<div class="t" style="left:489px;top:655px;font-size:12px;color:#222">演示品名</div>
<div class="t lat" style="left:489px;top:674px;font-size:13px;color:#aaa;letter-spacing:0.3px">demo-sku</div>
<div class="t blue" style="left:678px;top:655px;font-size:12.5px;letter-spacing:0.8px">895-9462275-455...</div>
<div class="t blue" style="left:804px;top:655px;font-size:12px">【拆】</div>
<div class="ab" style="left:678px;top:675px;width:55px;height:18px;background:#f0f0f0;border-radius:3px"></div>
<div class="t" style="left:681px;top:678px;font-size:13px;color:#aaa;letter-spacing:0.2px">Shipped</div>
<div class="t" style="left:673px;top:704px;font-size:13px;color:#222;letter-spacing:0.2px">【Standard】</div>
<div class="t" style="left:864px;top:655px;font-size:12px;color:#999">收件人:</div>
<div class="t" style="left:915px;top:654px;font-size:13px;color:#222;letter-spacing:0.2px">receiver【美国】</div>
<div class="t" style="left:1049px;top:655px;font-size:12px;color:#999">销售收益:</div>
<div class="t" style="left:1109px;top:654px;font-size:13px;color:#222;letter-spacing:0.4px">USD0.01</div>
<div class="t" style="left:1049px;top:675px;font-size:12px;color:#999">预估毛利:</div>
<div class="t" style="left:1109px;top:674px;font-size:13px;color:#222">-</div>
<div class="t" style="left:1049px;top:695px;font-size:12px;color:#999">预估运费:</div>
<div class="t" style="left:1109px;top:694px;font-size:13px;color:#222;letter-spacing:0.4px">-</div>
<div class="t" style="left:1265px;top:655px;font-size:12px;color:#999">下单:</div>
<div class="t" style="left:1301px;top:654px;font-size:13px;color:#222;letter-spacing:0.68px">2022-11-30 17:06:40</div>
<div class="t" style="left:1265px;top:675px;font-size:12px;color:#999">送达:</div>
<div class="t" style="left:1302px;top:674px;font-size:13px;color:#222">-</div>
<div class="t" style="left:1265px;top:695px;font-size:12px;color:#999">发货:</div>
<div class="t" style="left:1302px;top:694px;font-size:13px;color:#222">-</div>
<div class="t" style="left:1471px;top:655px;font-size:12px;color:#999">发货仓库:<span style="color:#222;margin-left:7px">-</span></div>
<div class="t" style="left:1471px;top:675px;font-size:12px;color:#999">物流渠道:<span style="color:#222;margin-left:7px">演示物流-演示渠道</span></div>
<div class="t" style="left:1471px;top:695px;font-size:12px;color:#999">跟踪号:<span style="color:#222;margin-left:7px">-</span></div>
<div class="t" style="left:1471px;top:715px;font-size:12px;color:#999">物流商单号:<span style="color:#222;margin-left:7px">-</span></div>
<div class="t" style="left:1682px;top:655px;font-size:12px;color:#222">待打单</div>
<svg class="ab" style="left:1683px;top:681px" width="15" height="15" viewBox="0 0 15 15"><rect x="0" y="0" width="11" height="15" fill="#dde0e5"/><rect x="9" y="7" width="6" height="8" fill="#dde0e5"/><path d="M2 3 H9 M2 9 V14 M4 9 V14 M6 9 V14 M8 9 V14" stroke="#fff" stroke-width="0.8"/></svg>
<div class="t" style="left:1702px;top:682px;font-size:12px;color:#aaa">面单</div>
<div class="ab" style="left:1734px;top:681px;width:1px;height:14px;background:#ddd"></div>
<svg class="ab" style="left:1744px;top:681px" width="15" height="15" viewBox="0 0 15 15"><rect x="3" y="0" width="9" height="6" fill="#dde0e5"/><rect x="0" y="6" width="15" height="9" fill="#dde0e5"/><path d="M5 2 H10 M3 11 H12" stroke="#fff" stroke-width="0.8"/></svg>
<div class="t" style="left:1763px;top:682px;font-size:12px;color:#aaa">拣货单</div>
<div class="ab" style="left:1807px;top:681px;width:1px;height:14px;background:#ddd"></div>
<svg class="ab" style="left:1817px;top:682px" width="15" height="14" viewBox="0 0 15 14"><rect x="0" y="0" width="15" height="10" fill="#dde0e5"/><rect x="5" y="11" width="5" height="2" fill="#dde0e5"/><path d="M7.5 7 V2.5 M6 4 L7.5 2.5 L9 4" stroke="#fff" stroke-width="0.8" fill="none"/></svg>
<div class="t" style="left:1836px;top:682px;font-size:12px;color:#aaa">提交平台</div>
<div class="ab" style="left:167px;top:735px;width:1719px;height:32px;background:#f7f7f7;border-radius:5px"></div>
<svg class="ab" style="left:175px;top:745px" width="14" height="14" viewBox="0 0 14 14"><rect x="0.8" y="0.8" width="12.4" height="12.4" rx="1.5" fill="#fff" stroke="#d5dae2" stroke-width="1.6"/></svg>
<div class="t blue lat" style="left:203px;top:744px;font-size:13px;letter-spacing:0.25px">P116k92375</div>
<div class="ab" style="left:282px;top:742px;width:18px;height:18px;border:1px solid #ddd;border-radius:2px;background:#fff"></div>
<div class="t" style="left:285px;top:745px;font-size:12px;color:#666">拆</div>
<div class="ab" style="left:311px;top:744px;width:1px;height:14px;background:#ddd"></div>
<div class="t" style="left:326px;top:745px;font-size:12px;color:#999">店铺<span style="margin:0 1px">/</span>平台 <span style="color:#222;margin-left:4px">演示店铺<span style="margin-left:1px;letter-spacing:2px">/-</span></span></div>
<div class="t" style="left:1703px;top:745px;font-size:12px;color:#999">备注 <span style="color:#333;margin-left:5px">-</span></div>
<div class="t blue" style="left:1781px;top:745px;font-size:12px">打印面单</div>
<svg class="ab" style="left:1841px;top:748px" width="12" height="4" viewBox="0 0 12 4"><circle cx="2" cy="2" r="1.4" fill="#1f87e8"/><circle cx="6" cy="2" r="1.4" fill="#1f87e8"/><circle cx="10" cy="2" r="1.4" fill="#1f87e8"/></svg>
</body></html>
